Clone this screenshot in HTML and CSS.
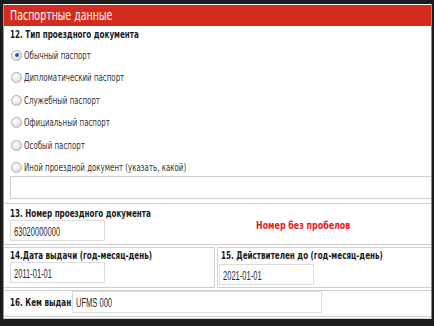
FILE: index.html
```html
<html>
	<head>
		<title>Паспортные данные</title>
		<meta charset="utf-8">
		<link rel="stylesheet" href="styles.css">
	</head>
	<body>
		<div class="frame">
			<div class="head"><span class="t">Паспортные данные</span></div>

			<div class="section">
				<div class="title"><span class="t">12. Тип проездного документа</span></div>
				<div class="radio first"><span class="dot checked"></span><span class="t">Обычный паспорт</span></div>
				<div class="radio"><span class="dot"></span><span class="t">Дипломатический паспорт</span></div>
				<div class="radio"><span class="dot"></span><span class="t">Служебный паспорт</span></div>
				<div class="radio"><span class="dot"></span><span class="t">Официальный паспорт</span></div>
				<div class="radio"><span class="dot"></span><span class="t">Особый паспорт</span></div>
				<div class="radio"><span class="dot"></span><span class="t">Иной проездной документ (указать, какой)</span></div>
				<div class="wide-field"></div>
			</div>

			<div class="rows">
				<div class="row row-13">
					<div class="cell">
						<div class="title"><span class="t">13. Номер проездного документа</span></div>
						<div class="field"><span class="t">63020000000</span></div>
					</div>
					<div class="hint"><span class="t">Номер без пробелов</span></div>
				</div>

				<div class="row row-split">
					<div class="cell half">
						<div class="title"><span class="t">14.Дата выдачи (год-месяц-день)</span></div>
						<div class="field"><span class="t">2011-01-01</span></div>
					</div>
					<div class="cell half right">
						<div class="title"><span class="t">15. Действителен до (год-месяц-день)</span></div>
						<div class="field"><span class="t">2021-01-01</span></div>
					</div>
				</div>

				<div class="row row-16">
					<div class="title inline"><span class="t">16. Кем выдан</span></div>
					<div class="field long"><span class="t">UFMS 000</span></div>
				</div>
			</div>
		</div>
	</body>
</html>
```

FILE: styles.css
```css
body {
	margin: 0;
	background-color: #1c1c1c;
	width: 434px;
	height: 326px;
	overflow: hidden;
	font-family: "DejaVu Sans Condensed", "DejaVu Sans", sans-serif;
	font-stretch: condensed;
}

/* the source is squeezed sideways, so text is narrowed too */
.t {
	display: inline-block;
	white-space: nowrap;
	transform: scaleX(0.8);
	transform-origin: 0 50%;
}

.frame {
	margin: 4px 2px 0 3px;
	height: 315px;
	background-color: #fff;
	border-left: 1px solid #9a9a9a;
	border-right: 1px solid #8a8a8a;
	display: flex;
	flex-direction: column;
	overflow: hidden;
}

.head {
	height: 21px;
	line-height: 21px;
	margin-top: 1px;
	background-color: #d42b1f;
	color: #fff;
	font-size: 13.5px;
	padding-left: 6px;
}

.head .t {
	transform: scaleX(0.78);
}

.section {
	padding-left: 6px;
}

.title {
	font-size: 10px;
	font-weight: bold;
	color: #1a1a1a;
}

.section .title {
	height: 15px;
	line-height: 15px;
	margin-top: 1px;
}

.radio {
	height: 22.5px;
	font-size: 9.8px;
	color: #333;
	display: flex;
	align-items: center;
}

.radio.first {
	margin-top: 2px;
}

.dot {
	width: 9px;
	height: 9px;
	border-radius: 50%;
	border: 1px solid #b0b0b0;
	background: radial-gradient(circle at 40% 35%, #fff 0%, #e8e8e8 55%, #c4c4c4 100%);
	margin: 0 2px 0 1px;
	position: relative;
	flex: none;
}

.dot.checked::after {
	content: "";
	position: absolute;
	left: 2.5px;
	top: 2.5px;
	width: 4px;
	height: 4px;
	border-radius: 50%;
	background-color: #2a5f9a;
}

.wide-field {
	margin-top: -3px;
	height: 21px;
	border: 1px solid #cfcfcf;
	border-right: none;
	margin-right: -4px;
}

.rows {
	display: flex;
	flex-direction: column;
	gap: 2px;
	margin-top: 4px;
	padding-bottom: 1px;
	flex: 1;
	border-bottom: 1px solid #cfcfcf;
}

.row {
	display: flex;
	border-top: 1px solid #cfcfcf;
	border-bottom: 1px solid #cfcfcf;
}

.row-13 {
	height: 40px;
	padding-left: 6px;
	align-items: flex-start;
}

.row-13 .cell {
	padding-top: 3px;
	width: 246px;
}

.cell .title {
	height: 13px;
	line-height: 13px;
}

.field {
	width: 95px;
	height: 21px;
	line-height: 21px;
	border: 1px solid #dcdcdc;
	font-family: "Liberation Sans", sans-serif;
	font-stretch: normal;
	font-size: 13px;
	color: #2a2a2a;
	padding-left: 3px;
	box-sizing: border-box;
}

.field .t {
	transform: scaleX(0.58);
}

.hint {
	color: #e8201a;
	font-size: 11px;
	font-weight: bold;
	margin-top: 15px;
}

.row-split {
	height: 41px;
	border: none;
	gap: 2px;
}

.half {
	flex: 1;
	box-sizing: border-box;
	border-top: 1px solid #cfcfcf;
	border-bottom: 1px solid #cfcfcf;
	border-right: 1px solid #cfcfcf;
	padding: 1px 0 0 6px;
}

.half.right {
	border-left: 1px solid #cfcfcf;
	border-right: none;
	padding-left: 1px;
	flex: 0 0 214px;
}

.half.right .title {
	margin-left: 2px;
}

.half.right .field {
	margin-top: 2px;
}

.row-16 {
	flex: 1;
	align-items: flex-start;
	padding-left: 6px;
}

.title.inline {
	width: 62px;
	line-height: 22px;
	margin-top: 1px;
}

.field.long {
	width: 250px;
	height: 22px;
	line-height: 22px;
}
```
